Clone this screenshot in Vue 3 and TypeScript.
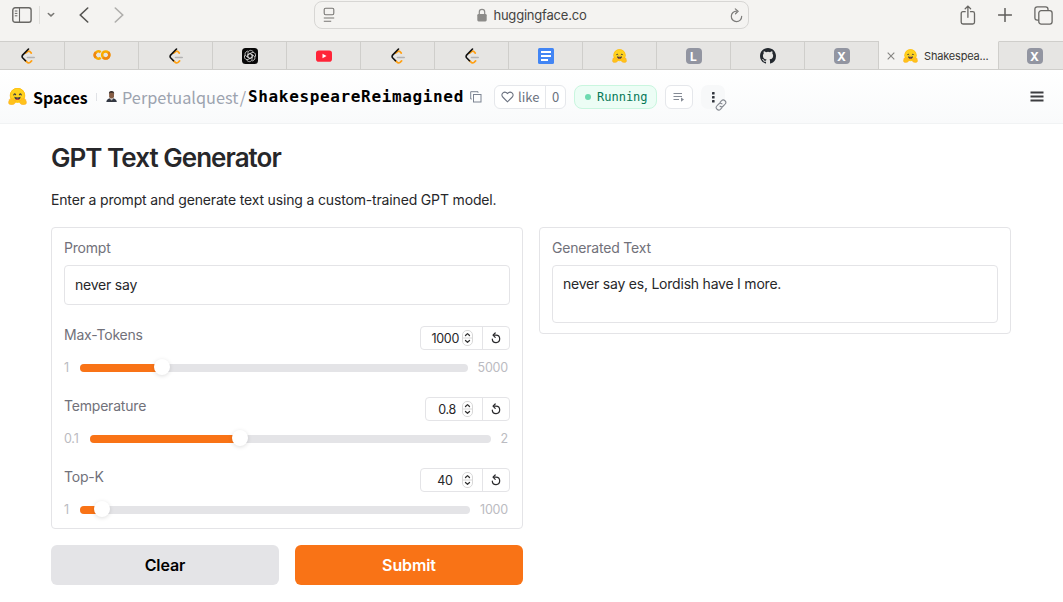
<script setup lang="ts">
import { ref } from 'vue'

interface Tab { icon: string; active?: boolean }
interface Slider { label: string; min: string; max: string; value: string; boxWidth: number; minWidth: number; trackWidth: number; fill: number; numRight: number }

const tabs: Tab[] = [
  { icon: 'leet' }, { icon: 'colab' }, { icon: 'leet' }, { icon: 'gpt' }, { icon: 'youtube' },
  { icon: 'leet' }, { icon: 'leet' }, { icon: 'docs' }, { icon: 'hug' }, { icon: 'L' },
  { icon: 'github' }, { icon: 'X' }, { icon: 'hug', active: true }, { icon: 'X' },
]
const sliders: Slider[] = [
  { label: 'Max-Tokens', min: '1', max: '5000', value: '1000', boxWidth: 90, minWidth: 16, trackWidth: 388, fill: 82, numRight: 3 },
  { label: 'Temperature', min: '0.1', max: '2', value: '0.8', boxWidth: 85, minWidth: 26, trackWidth: 401, fill: 150, numRight: 6 },
  { label: 'Top-K', min: '1', max: '1000', value: '40', boxWidth: 90, minWidth: 16, trackWidth: 390, fill: 22, numRight: 9.5 },
]
const prompt = ref('never say')
const output = ref('never say es, Lordish have I more.')
</script>

<template>
  <div class="window">
    <svg width="0" height="0" class="defs" aria-hidden="true">
      <symbol id="hug" viewBox="0 0 20 18">
        <circle cx="10" cy="8" r="7.9" fill="#ffd21e" />
        <path d="M2.2 8a7.8 7.8 0 0 1 15.6 0c0 2.4-1 4.5-2.6 5.9H4.8A7.8 7.8 0 0 1 2.200 8Z" fill="#ffd21e" stroke="#ffb000" stroke-width=".6" />
        <path d="M6.100 7.300q.8-2.200 1.900-.2M12.100 7.100q1.100-2 1.900.2" fill="none" stroke="#3a3b45" stroke-width="1.300" stroke-linecap="round" />
        <path d="M6.700 9.300q3.300 1.400 6.600 0c0 4.600-6.600 4.600-6.600 0Z" fill="#3a3b45" />
        <path d="M8.400 11.800q1.600-1.500 3.200 0-1.600 1.200-3.200 0Z" fill="#f94040" />
        <path d="M1.200 13.100c-.3-1.300.9-1.700 1.600-.8-.5-1.800 1.200-1.900 1.700-.5.4-1.200 1.700-.7 1.700.5l.5 1.100c.5-1.100 1.800-.9 1.500.4-.3 2.500-2 4-4.600 3.900-2.500.1-4-1.600-2.400-4.600ZM18.800 13.100c.3-1.300-.9-1.700-1.600-.8.5-1.800-1.200-1.900-1.700-.5-.4-1.200-1.700-.7-1.700.5l-.5 1.100c-.5-1.100-1.800-.9-1.500.4.3 2.500 2 4 4.600 3.900 2.500.1 4-1.600 2.400-4.600Z" fill="#ffc21b" stroke="#ffa91b" stroke-width=".5" />
      </symbol>
      <symbol id="leet" viewBox="0 0 16 16">
        <path d="M5.400 5.200 8 3.400q1-.6 2 .2l1.300 1.500M5.300 12.600l2.200 1.900q1.300.9 2.600-.1l1.500-1.500" fill="none" stroke="#ffa116" stroke-width="1.700" stroke-linecap="round" />
        <path d="M8.500 1 2.600 7.100q-1 1.300 0 2.600l2.900 3" fill="none" stroke="#111" stroke-width="1.600" stroke-linecap="round" />
        <path d="M7.500 9.500h6.700" stroke="#b3b3b3" stroke-width="1.600" stroke-linecap="round" />
      </symbol>
    </svg>

    <header class="toolbar">
      <div class="side left-tools">
        <svg class="sidebar" width="20" height="16" viewBox="0 0 20 16" fill="none" stroke="#686764">
          <rect x=".8" y=".8" width="18.300" height="14.400" rx="2.300" stroke-width="1.400" />
          <path d="M7.500 1v14" stroke-width="1.100" /><path d="M2.800 4h2.600M2.800 6.400h2.600M2.800 8.800h2.600" />
        </svg>
        <i class="separator"></i>
        <svg class="caret" width="8" height="6" viewBox="0 0 8 6"><path d="m1.300 1.500 2.700 2.400 2.700-2.400" fill="none" stroke="#777673" stroke-width="1.500" stroke-linecap="round" /></svg>
        <svg class="back" width="10" height="16" viewBox="0 0 10 16"><path d="M8.700 1 1.300 8l7.400 7" fill="none" stroke="#555451" stroke-width="1.600" stroke-linecap="round" /></svg>
        <svg width="10" height="16" viewBox="0 0 10 16"><path d="m1.300 1 7.400 7-7.400 7" fill="none" stroke="#afaeac" stroke-width="1.600" stroke-linecap="round" /></svg>
      </div>
      <div class="address">
        <svg width="12" height="16" viewBox="0 0 12 16" fill="none" stroke="#777673" stroke-width="1.100"><rect x="1.200" y="1.200" width="9.600" height="6.500" rx="1.400" /><path d="M.8 11h10.400M.8 14.200h7.400" /></svg>
        <div class="host">
          <svg width="10" height="14" viewBox="0 0 10 14"><rect x=".3" y="6" width="9.400" height="7.400" rx="1.300" fill="#8c8b89" /><path d="M2.300 6.500V4a2.700 2.700 0 0 1 5.400 0v2.500" fill="none" stroke="#8c8b89" stroke-width="1.200" /></svg>
          <span>huggingface.co</span>
        </div>
        <svg width="13" height="15" viewBox="0 0 13 15" fill="none" stroke="#7c7b79" stroke-width="1.200" stroke-linecap="round"><path d="M6.800 3.200a5.200 5.200 0 1 0 4.900 5.100" /><path d="m5.300.9 2.800 2.400-2.600 2.500" /></svg>
      </div>
      <div class="side right-tools">
        <svg width="16" height="20" viewBox="0 0 16 20" fill="none" stroke="#686764" stroke-width="1.300" stroke-linecap="round"><path d="M5.200 6.700H3Q1.200 6.700 1.200 8.500v8.700Q1.200 19 3 19h9.700q1.800 0 1.800-1.800V8.500q0-1.800-1.800-1.800h-2.200M7.900 12.300V1.200M5.200 3.700l2.700-2.600 2.700 2.600" /></svg>
        <svg width="14" height="14" viewBox="0 0 14 14"><path d="M7 .5v13M.5 7h13" stroke="#5f5e5b" stroke-width="1.500" stroke-linecap="round" /></svg>
        <svg width="19" height="19" viewBox="0 0 19 19" fill="none" stroke="#686764" stroke-width="1.300"><path d="M4.800 14.100H3.300Q.9 14.100.9 11.700V3.300Q.9.9 3.300.9h8.300Q14 .9 14 3.300v1.400" /><rect x="4.800" y="4.700" width="13.300" height="13.400" rx="2.400" /></svg>
      </div>
    </header>

    <nav class="tabs">
      <div v-for="(tab, index) in tabs" :key="index" class="tab" :class="{ active: tab.active }">
        <template v-if="tab.active">
          <svg class="close" width="8" height="8" viewBox="0 0 8 8"><path d="m.7.7 6.600 6.600m0-6.600L.7 7.300" stroke="#858482" stroke-width="1.100" /></svg>
          <svg width="15" height="14"><use href="#hug" /></svg>
          <span>Shakespea...</span>
        </template>
        <svg v-else-if="tab.icon === 'leet'" width="16" height="16"><use href="#leet" /></svg>
        <svg v-else-if="tab.icon === 'hug'" width="15" height="14"><use href="#hug" /></svg>
        <svg v-else-if="tab.icon === 'colab'" class="colab" width="18" height="12" viewBox="0 0 18 12" fill="none" stroke-width="2.500"><path d="M7.700 3.200A3.600 3.600 0 1 0 7.700 8.800" stroke="#f9ab00" /><circle cx="12.700" cy="6" r="3.600" stroke="#f9ab00" /><path d="M10.200 8.500a3.600 3.600 0 0 0 5.100-5.100M2.800 3.400A3.600 3.600 0 0 0 2.800 8.600" stroke="#ef8410" /></svg>
        <svg v-else-if="tab.icon === 'gpt'" width="16" height="16" viewBox="0 0 16 16" fill="none" stroke="#ddd" stroke-width=".8"><rect width="16" height="16" rx="3.500" fill="#080808" stroke="none" /><path v-for="n in 6" :key="n" :transform="`rotate(${n * 60} 8 8)`" d="M6 6.700V4.600q0-1.100 1-1.700l.6-.3q1-.5 2 0l1.700 1M6 6.700l2-1.200 2.600 1.500" /></svg>
        <svg v-else-if="tab.icon === 'youtube'" width="16" height="12" viewBox="0 0 16 12"><rect y=".4" width="16" height="11.300" rx="2.800" fill="#ff2438" /><path d="m6.500 3.700 4 2.300-4 2.300Z" fill="#fff" /></svg>
        <svg v-else-if="tab.icon === 'docs'" width="16" height="16" viewBox="0 0 16 16"><rect width="16" height="16" rx="1.500" fill="#4285f4" /><path d="M3 4h10M3 8h10M3 12h7" stroke="#fff" stroke-width="2" /></svg>
        <svg v-else-if="tab.icon === 'github'" width="16" height="16" viewBox="0 0 16 16"><path fill="#24292f" d="M8 0C3.580 0 0 3.580 0 8c0 3.540 2.290 6.530 5.470 7.590.4.070.55-.17.55-.38v-1.490c-2.010.37-2.530-.49-2.690-.94-.09-.23-.48-.94-.82-1.130-.28-.15-.68-.52-.01-.53.63-.01 1.080.58 1.230.82.72 1.210 1.870.87 2.330.66.07-.52.28-.87.51-1.070-1.780-.2-3.640-.89-3.640-3.950 0-.87.31-1.590.82-2.150-.08-.2-.36-1.020.08-2.120 0 0 .67-.21 2.200.82a7.600 7.600 0 0 1 4 0c1.530-1.040 2.200-.82 2.200-.82.44 1.100.16 1.920.08 2.120.51.56.82 1.270.82 2.150 0 3.070-1.870 3.750-3.650 3.950.29.25.54.73.54 1.480v2.200c0 .21.15.46.55.38A8.010 8.010 0 0 0 16 8c0-4.420-3.580-8-8-8Z" /></svg>
        <b v-else class="letter">{{ tab.icon }}</b>
      </div>
    </nav>

    <section class="space-header">
      <svg width="19" height="17"><use href="#hug" /></svg>
      <strong class="spaces">Spaces</strong>
      <i class="divider"></i>
      <svg class="avatar" width="11" height="11" viewBox="0 0 11 11"><path d="M.3 11q.4-3.300 3.700-3.800h3q3.400.5 3.800 3.800Z" fill="#333843" /><path d="m4 7 1.500 3.200L7.100 7Z" fill="#eee" /><path d="m5.500 8 .7 3H4.800Z" fill="#333" /><rect x="3.100" y=".5" width="4.900" height="7" rx="2.300" fill="#855d44" /><path d="M3 3.300Q2.500 0 5.500 0t2.600 3.300L7.300 1.700H3.700Z" fill="#342b28" /></svg>
      <span class="owner">Perpetualquest</span><span class="slash">/</span>
      <strong class="repo">ShakespeareReimagined</strong>
      <svg class="copy" width="12" height="12" viewBox="0 0 12 12" fill="none" stroke="#7c8492"><rect x="3.500" y="3.500" width="7.500" height="7.500" /><path d="M1.800 8H.7V.7H8v1.100" /></svg>
      <div class="likes">
        <span class="like"><svg width="13" height="12" viewBox="0 0 13 12"><path d="M6.500 10.800 1.700 6C-.9 3.100 3.400-.8 6.500 2.500c3.100-3.300 7.400.6 4.800 3.500Z" fill="none" stroke="#6b7280" stroke-width="1.100" /></svg><span>like</span></span>
        <span class="count">0</span>
      </div>
      <div class="running"><i></i><span>Running</span></div>
      <div class="logs"><svg width="12" height="12" viewBox="0 0 12 12"><path d="M.5 2.500h8.500M.5 5.500h8.500M.5 8.500H6" stroke="#858b95" /><path d="m8 6.500 3 2.100-3 2.100Z" fill="#858b95" /></svg></div>
      <div class="more">
        <svg class="dots" width="3" height="11" viewBox="0 0 3 11" fill="#30343c"><rect width="2.600" height="2.500" rx=".6" /><rect y="4" width="2.600" height="2.500" rx=".6" /><rect y="8" width="2.600" height="2.500" rx=".6" /></svg>
        <svg class="link" width="12" height="12" viewBox="0 0 12 12" fill="none" stroke="#858991" stroke-width="1.100" stroke-linecap="round"><path d="m5 3.300 1.600-1.700C8.800-.4 12.200 2.800 10.200 5L8.300 7Q6.700 8.400 5.100 7.200M7 8.600l-1.600 1.800C3.200 12.400-.2 9.200 1.800 7l1.900-2Q5.300 3.600 6.900 4.800" /></svg>
      </div>
      <svg class="menu" width="14" height="11" viewBox="0 0 14 11"><path d="M.5 1.500h13M.5 5.500h13M.5 9.500h13" stroke="#3c3d40" stroke-width="1.900" /></svg>
    </section>

    <main>
      <h1><span>GPT Text Generator</span></h1>
      <p class="intro">Enter a prompt and generate text using a custom-trained GPT model.</p>
      <div class="columns">
        <div class="column">
          <div class="panel inputs">
            <div class="label">Prompt</div>
            <div class="field prompt">{{ prompt }}</div>
            <div v-for="slider in sliders" :key="slider.label" class="slider">
              <div class="slider-head">
                <span class="label">{{ slider.label }}</span>
                <div class="number" :style="{ width: slider.boxWidth + 'px' }">
                  <span class="value" :style="{ marginRight: slider.numRight + 'px' }">{{ slider.value }}</span>
                  <svg class="spinner" width="11" height="16" viewBox="0 0 11 16"><rect x=".5" y=".5" width="10" height="15" rx="4.500" fill="#fff" stroke="#d8d8d8" /><path d="M.5 8h10" stroke="#d8d8d8" /><path d="m3.500 5.500 2-1.900 2 1.900M3.500 10.500l2 1.900 2-1.900" fill="none" stroke="#333" stroke-width="1.300" stroke-linecap="round" stroke-linejoin="round" /></svg>
                  <span class="reset"><svg width="10" height="12" viewBox="0 0 10 12"><path d="M2.600 3.200H5a3.700 3.700 0 1 1-3.700 3.900" fill="none" stroke="#29292c" stroke-width="1.200" stroke-linecap="round" /><path d="M4.200 1 2 3.200l2.200 2.200" fill="none" stroke="#29292c" stroke-width="1.200" stroke-linecap="round" stroke-linejoin="round" /></svg></span>
                </div>
              </div>
              <div class="range">
                <span class="minimum" :style="{ width: slider.minWidth + 'px' }">{{ slider.min }}</span>
                <div class="track" :style="{ width: slider.trackWidth + 'px' }"><div class="fill" :style="{ width: slider.fill + 'px' }"><i class="thumb"></i></div></div>
                <span class="maximum">{{ slider.max }}</span>
              </div>
            </div>
          </div>
          <div class="actions"><button class="clear">Clear</button><button class="submit">Submit</button></div>
        </div>
        <div class="panel output-panel">
          <div class="label">Generated Text</div>
          <div class="field output">{{ output }}</div>
        </div>
      </div>
    </main>
  </div>
</template>

<style>
html, body { margin: 0; overflow: hidden; background: #fff; }
</style>

<style scoped>
* { box-sizing: border-box; }
svg { display: block; flex: none; }
.defs { position: absolute; }
.window { width: 1063px; height: 602px; overflow: hidden; background: #fff; font-family: Inter, "Liberation Sans", sans-serif; color: #27272a; }
.toolbar { height: 41px; background: #f4f3f1; display: flex; justify-content: space-between; }
.side { height: 30px; display: flex; align-items: center; }
.left-tools { width: 314px; padding-left: 12px; }
.separator { width: 1px; height: 18px; background: #deddda; margin-left: 7px; }
.caret { margin-left: 7px; }
.back { margin: 0 25px 0 24px; }
.address { margin-top: 1px; width: 435px; height: 28px; border: 1px solid #d7d6d4; border-radius: 8px; display: flex; align-items: center; justify-content: space-between; padding: 0 5px 0 8px; }
.host { display: flex; align-items: center; gap: 6px; font-size: 13px; letter-spacing: -.2px; color: #454442; line-height: 16px; margin-left: -1px; }
.right-tools { width: 314px; justify-content: flex-end; gap: 22px; padding-right: 10px; }
.tabs { height: 29px; margin-left: -9px; width: 1081px; display: flex; }
.tab { width: 74px; flex: none; height: 29px; background: #e6e5e3; border: solid #cfcecb; border-width: 1px 1px 1px 0; display: flex; justify-content: center; align-items: center; }
.tab.active { width: 120px; background: #f4f3f1; border-top-color: #f4f3f1; justify-content: flex-start; padding-left: 8px; }
.tab.active > svg:nth-child(2) { margin: 0 5px 0 8px; }
.tab.active span { font-size: 11px; letter-spacing: -.18px; color: #363532; white-space: nowrap; margin-left: 1px; }
.tab:last-child { padding-right: 2px; }
.colab { margin-top: -2px; }
.letter { width: 16px; height: 16px; border-radius: 4px; background: #9295a1; color: #fff; font: bold 12px/17px Inter, sans-serif; text-align: center; }
.space-header { height: 54px; background: linear-gradient(#fff, #f9fafb); border-bottom: 1px solid #f1f3f4; padding-left: 8px; display: flex; align-items: center; color: #000; }
.space-header > * { flex: none; white-space: nowrap; }
.spaces { font: bold 16px/24px "Noto Sans CJK SC", sans-serif; margin-left: 6px; width: 55px; }
.divider { width: 1px; height: 8px; margin: 0 9px 0 8px; background: #e0e2e6; }
.avatar { margin-right: 5px; }
.owner, .slash { font: 16.300px/24px "Noto Sans CJK SC", sans-serif; color: #9ca3af; }
.owner { width: 116px; }
.slash { width: 10px; text-align: center; }
.repo { width: 216px; font: bold 16px/24px "DejaVu Sans Mono", monospace; letter-spacing: .65px; }
.copy { margin-left: 6px; }
.likes { margin-left: 12px; width: 72px; height: 24px; display: flex; align-items: stretch; border: 1px solid #e5e7eb; border-radius: 6px; background: #fff; color: #6b7280; font: 13px/22px "Noto Sans CJK SC", sans-serif; overflow: hidden; }
.like { width: 51px; display: flex; align-items: center; gap: 4px; padding-left: 6px; border-right: 1px solid #e5e7eb; }
.count { flex: 1; text-align: center; }
.running { margin-left: 8px; margin-top: 1px; width: 83px; height: 24px; display: flex; align-items: center; padding-left: 10px; border: 1px solid #c9f6df; background: #ecfdf5; border-radius: 8px; color: #047857; font: 12px/20px "DejaVu Sans Mono", monospace; }
.running i { width: 6px; height: 6px; border-radius: 50%; background: #6ddab0; margin-right: 6px; }
.logs { margin-left: 8px; width: 28px; height: 24px; border: 1px solid #e5e7eb; border-radius: 6px; background: #fff; display: flex; align-items: center; justify-content: center; }
.more { margin-left: 8px; position: relative; width: 24px; height: 24px; border-radius: 7px; background: #f7f8f9; padding: 7px 0 0 11px; }
.link { position: absolute; left: 14px; top: 14px; }
.menu { margin-left: auto; margin-right: 19px; }
main { padding: 18px 52px 0 51px; }
h1 { height: 30px; margin: 0; font-size: 26px; line-height: 31px; font-weight: 600; letter-spacing: -.96px; white-space: nowrap; }
.intro { margin: 18px 0 17px; font-size: 14px; line-height: 20px; letter-spacing: -.16px; }
.columns { display: flex; align-items: flex-start; gap: 16px; }
.column, .output-panel { width: 472px; flex: none; }
.panel { border: 1px solid #e4e4e7; border-radius: 4px; padding: 10px 12px; }
.inputs { height: 302px; }
.output-panel { height: 107px; }
.label { font-size: 14px; line-height: 20px; color: #71717a; letter-spacing: -.2px; }
.field { margin-top: 7px; border: 1px solid #e4e4e7; border-radius: 4px; padding: 0 10px; font-size: 14px; letter-spacing: -.22px; }
.prompt { height: 40px; line-height: 38px; }
.output { height: 58px; padding-top: 8px; line-height: 20px; }
.slider { height: 71px; padding-top: 21px; }
.slider-head { height: 24px; display: flex; justify-content: space-between; }
.slider-head .label { margin-top: -1px; }
.number { height: 24px; border: 1px solid #e4e4e7; border-radius: 4px; display: flex; align-items: center; justify-content: flex-end; font-size: 12.500px; letter-spacing: -.3px; }
.spinner { margin-right: 9px; }
.reset { width: 27px; height: 22px; border-left: 1px solid #e4e4e7; display: flex; align-items: center; justify-content: center; }
.range { height: 20px; margin-top: 8px; display: flex; align-items: center; color: #bbbbc1; font-size: 12.500px; line-height: 20px; letter-spacing: -.2px; }
.track { height: 8px; border-radius: 4px; background: #e4e4e7; flex: none; }
.fill { height: 8px; border-radius: 4px; background: #f97316; position: relative; }
.thumb { position: absolute; width: 16px; height: 16px; right: -8px; top: -5px; border-radius: 50%; background: #fff; box-shadow: 0 1px 4px #0002; }
.maximum { flex: 1; text-align: right; margin-right: 2px; }
.actions { display: flex; gap: 16px; margin-top: 16px; }
button { width: 228px; height: 40px; border: 0; border-radius: 6px; padding: 0; font: 600 16px/40px Inter, sans-serif; color: #000; background: #e4e4e7; letter-spacing: -.1px; }
.submit { background: #f97316; color: #fff; }
</style>
